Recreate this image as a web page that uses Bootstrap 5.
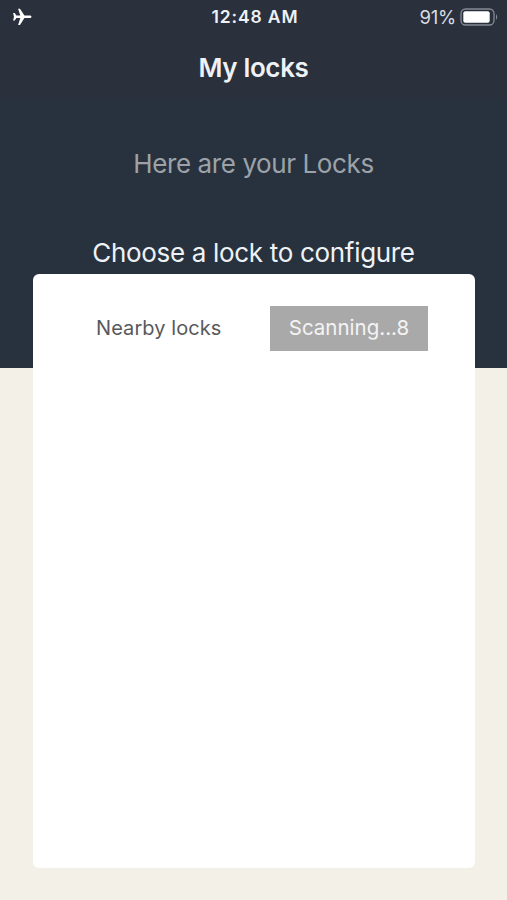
<!DOCTYPE html>
<html lang="en">
<head>
<meta charset="utf-8">
<meta name="viewport" content="width=device-width, initial-scale=1">
<title>My locks</title>
<link href="https://cdn.jsdelivr.net/npm/bootstrap@5.3.0/dist/css/bootstrap.min.css" rel="stylesheet">
<style>
body { font-family: Inter, "Liberation Sans", sans-serif; background: linear-gradient(#28323e 368px, #f3f0e7 368px); height: 900px; overflow: hidden; white-space: nowrap; }
.top-area { background: #2a303c; height: 98px; color: #eef1f6; }
.status-bar { height: 34px; padding: 0 9px 0 12px; display: grid; grid-template-columns: 1fr auto 1fr; }
.clock { font-size: 17.5px; font-weight: 600; letter-spacing: .85px; padding-top: 1px; }
.battery-text { font-size: 18.5px; letter-spacing: -.25px; color: #d9dde3; padding-top: 1px; }
.screen-title { font-size: 26px; font-weight: 600; line-height: 32px; padding-top: 18px; letter-spacing: -.35px; }
.intro { font-size: 26px; line-height: 32px; color: #9da2a9; padding-top: 50px; letter-spacing: -.4px; }
.prompt { font-size: 26px; line-height: 32px; color: #eef2f6; padding-top: 57px; letter-spacing: -.32px; }
.lock-panel { margin: 4.5px 32px 0 33px; height: 594.5px; border-radius: 6px; padding: 32.5px 47px 0 63px; }
.nearby { font-size: 20px; color: #58595b; letter-spacing: .08px; }
.scan-btn { width: 158px; height: 44.5px; padding-top: 1px !important; font-size: 20.5px; background: #a9a9a9 !important; color: #f4f4f4 !important; opacity: 1 !important; }
</style>
</head>
<body>
<header class="top-area">
  <div class="status-bar align-items-center">
    <svg width="20" height="18" viewBox="0 0 20 18" fill="#fff"><path d="M19.5 8.8c0-.8-.9-1.3-2.1-1.3h-5L8 .7H6.1l2.2 6.8H4.4L2.7 5H1.1l.9 3.8-.9 3.8h1.6l1.7-2.5h3.9L6.1 16.9H8l4.4-6.8h5c1.2 0 2.1-.5 2.1-1.3z"/></svg>
    <div class="clock">12:48 AM</div>
    <div class="d-flex align-items-center justify-content-end">
      <span class="battery-text me-1">91%</span>
      <svg width="38" height="19" viewBox="0 0 38 19"><rect x="1" y="1" width="33" height="16" rx="4.5" fill="none" stroke="#858a93" stroke-width="1.3"/><rect x="3.3" y="3.2" width="26.4" height="11.6" rx="2" fill="#fff"/><path d="M36 6q2.4 3 0 6z" fill="#858a93"/></svg>
    </div>
  </div>
  <h1 class="screen-title text-center mb-0">My locks</h1>
</header>
<main>
  <p class="intro text-center mb-0">Here are your Locks</p>
  <p class="prompt text-center mb-0">Choose a lock to configure</p>
  <section class="lock-panel bg-white">
    <div class="d-flex align-items-center justify-content-between">
      <span class="nearby">Nearby locks</span>
      <button class="scan-btn btn border-0 rounded-0 p-0" type="button" disabled>Scanning...8</button>
    </div>
  </section>
</main>
<script src="https://cdn.jsdelivr.net/npm/bootstrap@5.3.0/dist/js/bootstrap.bundle.min.js"></script>
</body>
</html>
